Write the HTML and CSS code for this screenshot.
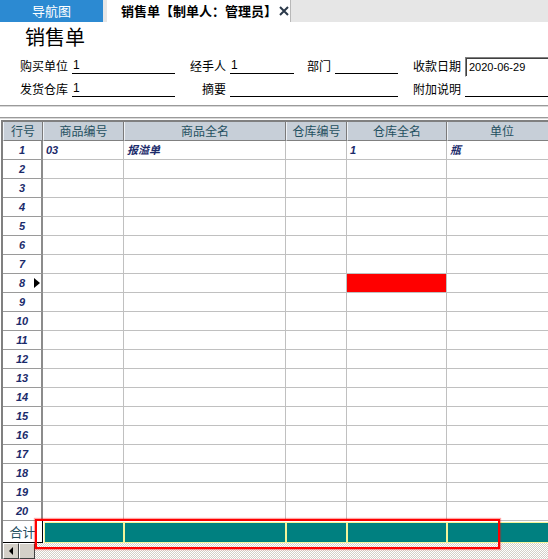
FILE: index.html
```html
<!DOCTYPE html>
<html lang="zh-CN">
<head>
<meta charset="utf-8">
<title>销售单</title>
<link rel="stylesheet" href="styles.css">
</head>
<body>
<div class="page">
  <div class="tabbar">
    <div class="tab-nav">导航图</div>
    <div class="tab-active"><span>销售单【制单人：管理员】</span><svg class="close" width="10" height="10" viewBox="0 0 10 10"><path d="M1 1 L9 9 M9 1 L1 9" stroke="#2b3a4a" stroke-width="2" fill="none"/></svg></div>
  </div>
  <div class="title">销售单</div>
  <div class="form">
    <div class="lbl">购买单位</div><div class="fld">1</div>
    <div class="lbl r">经手人</div><div class="fld">1</div>
    <div class="lbl r">部门</div><div class="fld"></div>
    <div class="lbl r">收款日期</div><div class="date">2020-06-29</div>
    <div class="lbl">发货仓库</div><div class="fld">1</div>
    <div class="lbl r">摘要</div><div class="fld span3"></div>
    <div class="lbl r">附加说明</div><div class="fld"></div>
  </div>
  <div class="sep sep1"></div>
  <div class="sep sep2"></div>
  <div class="grid">
    <div class="row head">
      <div class="cell">行号</div><div class="cell">商品编号</div><div class="cell">商品全名</div><div class="cell">仓库编号</div><div class="cell">仓库全名</div><div class="cell">单位</div>
    </div>
    <div class="row"><div class="num">1</div><div class="cell d">03</div><div class="cell d">报溢单</div><div class="cell"></div><div class="cell d">1</div><div class="cell d">瓶</div></div>
    <div class="row"><div class="num">2</div><div class="cell"></div><div class="cell"></div><div class="cell"></div><div class="cell"></div><div class="cell"></div></div>
    <div class="row"><div class="num">3</div><div class="cell"></div><div class="cell"></div><div class="cell"></div><div class="cell"></div><div class="cell"></div></div>
    <div class="row"><div class="num">4</div><div class="cell"></div><div class="cell"></div><div class="cell"></div><div class="cell"></div><div class="cell"></div></div>
    <div class="row"><div class="num">5</div><div class="cell"></div><div class="cell"></div><div class="cell"></div><div class="cell"></div><div class="cell"></div></div>
    <div class="row"><div class="num">6</div><div class="cell"></div><div class="cell"></div><div class="cell"></div><div class="cell"></div><div class="cell"></div></div>
    <div class="row"><div class="num">7</div><div class="cell"></div><div class="cell"></div><div class="cell"></div><div class="cell"></div><div class="cell"></div></div>
    <div class="row"><div class="num cur">8</div><div class="cell"></div><div class="cell"></div><div class="cell"></div><div class="cell red"></div><div class="cell"></div></div>
    <div class="row"><div class="num">9</div><div class="cell"></div><div class="cell"></div><div class="cell"></div><div class="cell"></div><div class="cell"></div></div>
    <div class="row"><div class="num">10</div><div class="cell"></div><div class="cell"></div><div class="cell"></div><div class="cell"></div><div class="cell"></div></div>
    <div class="row"><div class="num">11</div><div class="cell"></div><div class="cell"></div><div class="cell"></div><div class="cell"></div><div class="cell"></div></div>
    <div class="row"><div class="num">12</div><div class="cell"></div><div class="cell"></div><div class="cell"></div><div class="cell"></div><div class="cell"></div></div>
    <div class="row"><div class="num">13</div><div class="cell"></div><div class="cell"></div><div class="cell"></div><div class="cell"></div><div class="cell"></div></div>
    <div class="row"><div class="num">14</div><div class="cell"></div><div class="cell"></div><div class="cell"></div><div class="cell"></div><div class="cell"></div></div>
    <div class="row"><div class="num">15</div><div class="cell"></div><div class="cell"></div><div class="cell"></div><div class="cell"></div><div class="cell"></div></div>
    <div class="row"><div class="num">16</div><div class="cell"></div><div class="cell"></div><div class="cell"></div><div class="cell"></div><div class="cell"></div></div>
    <div class="row"><div class="num">17</div><div class="cell"></div><div class="cell"></div><div class="cell"></div><div class="cell"></div><div class="cell"></div></div>
    <div class="row"><div class="num">18</div><div class="cell"></div><div class="cell"></div><div class="cell"></div><div class="cell"></div><div class="cell"></div></div>
    <div class="row"><div class="num">19</div><div class="cell"></div><div class="cell"></div><div class="cell"></div><div class="cell"></div><div class="cell"></div></div>
    <div class="row"><div class="num">20</div><div class="cell"></div><div class="cell"></div><div class="cell"></div><div class="cell"></div><div class="cell"></div></div>
    <div class="row foot">
      <div class="sum">合计</div><div class="tc first"></div><div class="tc"></div><div class="tc"></div><div class="tc"></div><div class="tc"></div>
    </div>
    <div class="hscroll">
      <div class="sb-btn"><span class="arrow-left"></span></div>
      <div class="sb-btn"></div>
      <div class="sb-track"></div>
    </div>
  </div>
  <div class="mark"></div>
</div>
</body>
</html>
```

FILE: styles.css
```css
html, body {
  margin: 0;
  padding: 0;
  background: #fff;
  overflow: hidden;
}
body {
  font-family: "Noto Sans CJK SC", "Liberation Sans", sans-serif;
  font-size: 12px;
  color: #000;
}
.page {
  position: relative;
  width: 548px;
  height: 559px;
  overflow: hidden;
}

/* tab bar */
.tabbar {
  display: flex;
  height: 22px;
  background: #e6e6e6;
}
.tab-nav {
  width: 103px;
  background: #2c8ad2;
  color: #fff;
  font-size: 13px;
  line-height: 22px;
  text-align: center;
}
.tab-active {
  margin-left: 4px;
  width: 169px;
  padding-left: 14px;
  background: #fff;
  border-right: 1px solid #b8b8b8;
  display: flex;
  align-items: center;
  gap: 2px;
  font-size: 13px;
  font-weight: bold;
  line-height: 22px;
  white-space: nowrap;
}
.close {
  display: block;
  flex: none;
}

/* title */
.title {
  padding: 3px 0 0 25px;
  font-size: 20px;
  line-height: 24px;
  height: 24px;
}

/* header form */
.form {
  display: grid;
  grid-template-columns: 52px 103px 55px 64px 41px 63px 67px 90px;
  grid-template-rows: 21px 21px;
  row-gap: 2px;
  padding-left: 20px;
  margin-top: 8px;
  width: 535px;
}
.lbl {
  line-height: 17px;
  white-space: nowrap;
}
.lbl.r {
  text-align: right;
  padding-right: 4px;
}
.fld {
  height: 17px;
  box-sizing: border-box;
  border-bottom: 1px solid #000;
  padding-left: 1px;
  line-height: 16px;
  font-family: "Liberation Sans", sans-serif;
  font-size: 12px;
}
.fld.span3 {
  grid-column: span 3;
}
.date {
  height: 20px;
  box-sizing: border-box;
  border: 1px solid;
  border-color: #808080 #fff #fff #808080;
  box-shadow: inset 1px 1px 0 #404040;
  padding-left: 3px;
  font-family: "Liberation Sans", sans-serif;
  font-size: 11px;
  line-height: 18px;
}

/* separators */
.sep {
  height: 0;
  border-top: 1px solid #9a9a9a;
  border-bottom: 1px solid #d8d8d8;
}
.sep1 { margin-top: 4px; }
.sep2 { margin-top: 10px; }

/* grid */
.grid {
  margin-top: 1px;
  margin-left: 1px;
  border-top: 2px solid #808080;
  border-left: 2px solid #808080;
}
.row {
  display: grid;
  grid-template-columns: 40px 81px 162px 61px 100px 110px;
  height: 19px;
}
.cell {
  box-sizing: border-box;
  border-right: 1px solid #c0c0c0;
  border-bottom: 1px solid #c0c0c0;
  overflow: hidden;
  white-space: nowrap;
}
.head .cell {
  background: #c7cfd8;
  color: #1f4f5f;
  text-align: center;
  line-height: 18px;
  border-left: 1px solid #eef2f6;
  border-right: 1px solid #7a7a7a;
  border-bottom: 1px solid #808080;
}
.num {
  position: relative;
  box-sizing: border-box;
  border-right: 2px solid #8c8c8c;
  border-bottom: 1px solid #9a9a9a;
  text-align: center;
  font-family: "Liberation Sans", sans-serif;
  font-weight: bold;
  font-style: italic;
  font-size: 11px;
  line-height: 18px;
  color: #1b2b6b;
}
.num.cur::after {
  content: "";
  position: absolute;
  right: 1px;
  top: 4px;
  border-left: 6px solid #000;
  border-top: 5px solid transparent;
  border-bottom: 5px solid transparent;
}
.d {
  padding-left: 3px;
  font-family: "Liberation Sans", "Noto Sans CJK SC", sans-serif;
  font-weight: bold;
  font-style: italic;
  font-size: 11px;
  line-height: 18px;
  color: #1b2b6b;
}
.red {
  background: #ff0000;
}

/* total row */
.foot {
  height: 22px;
  background: #fff;
}
.sum {
  box-sizing: border-box;
  border-right: 1px solid #000;
  border-bottom: 1px solid #000;
  color: #1f4f5f;
  font-size: 13px;
  line-height: 21px;
  text-align: center;
}
.tc {
  margin-top: 1px;
  background: #008080;
  border: 1px solid #f4f49a;
  box-sizing: border-box;
}
.tc.first {
  margin-left: 1px;
}

/* horizontal scrollbar */
.hscroll {
  display: flex;
  height: 16px;
}
.sb-btn {
  width: 16px;
  height: 16px;
  box-sizing: border-box;
  background: #d4d0c8;
  border: 1px solid;
  border-color: #fff #404040 #404040 #fff;
  display: flex;
  align-items: center;
  justify-content: center;
}
.arrow-left {
  width: 0;
  height: 0;
  border-right: 4px solid #000;
  border-top: 4px solid transparent;
  border-bottom: 4px solid transparent;
}
.sb-track {
  flex: 1;
  background: repeating-conic-gradient(#d4d0c8 0 25%, #fff 0 50%) 0 0 / 2px 2px;
}

/* red annotation overlay */
.mark {
  position: absolute;
  left: 35px;
  top: 519px;
  width: 465px;
  height: 30px;
  box-sizing: border-box;
  border: 2px solid #ff0000;
  box-shadow: 0 0 1px 1px rgba(255, 0, 0, 0.35);
}
```
